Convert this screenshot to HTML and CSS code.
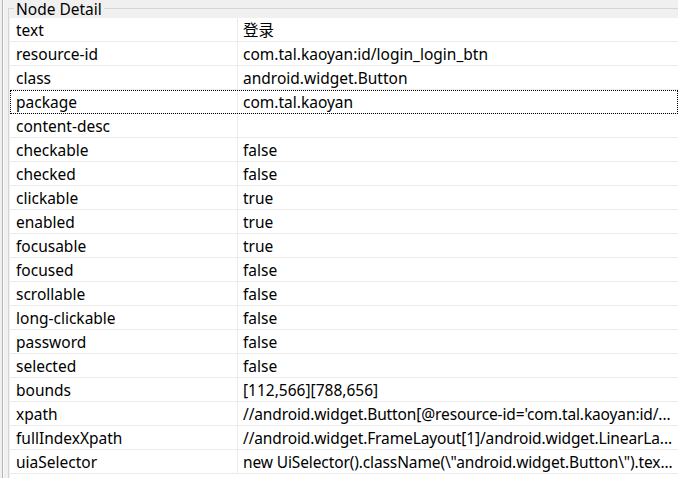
FILE: index.html
```html
<!DOCTYPE html>
<html>
<head>
<meta charset="utf-8">
<link rel="stylesheet" href="styles.css">
</head>
<body>
<div class="outer">
  <div class="edge"></div>
  <div class="group">
    <div class="legend">Node Detail</div>
    <div class="table">
      <div class="row"><div class="k">text</div><div class="v">登录</div></div>
      <div class="row"><div class="k">resource-id</div><div class="v">com.tal.kaoyan:id/login_login_btn</div></div>
      <div class="row"><div class="k">class</div><div class="v">android.widget.Button</div></div>
      <div class="row focus"><div class="k">package</div><div class="v">com.tal.kaoyan</div></div>
      <div class="row"><div class="k">content-desc</div><div class="v"></div></div>
      <div class="row"><div class="k">checkable</div><div class="v">false</div></div>
      <div class="row"><div class="k">checked</div><div class="v">false</div></div>
      <div class="row"><div class="k">clickable</div><div class="v">true</div></div>
      <div class="row"><div class="k">enabled</div><div class="v">true</div></div>
      <div class="row"><div class="k">focusable</div><div class="v">true</div></div>
      <div class="row"><div class="k">focused</div><div class="v">false</div></div>
      <div class="row"><div class="k">scrollable</div><div class="v">false</div></div>
      <div class="row"><div class="k">long-clickable</div><div class="v">false</div></div>
      <div class="row"><div class="k">password</div><div class="v">false</div></div>
      <div class="row"><div class="k">selected</div><div class="v">false</div></div>
      <div class="row"><div class="k">bounds</div><div class="v">[112,566][788,656]</div></div>
      <div class="row"><div class="k">xpath</div><div class="v tight">//android.widget.Button[@resource-id='com.tal.kaoyan:id/...</div></div>
      <div class="row"><div class="k">fullIndexXpath</div><div class="v tight">//android.widget.FrameLayout[1]/android.widget.LinearLa...</div></div>
      <div class="row"><div class="k">uiaSelector</div><div class="v tight">new UiSelector().className(\"android.widget.Button\").tex...</div></div>
    </div>
  </div>
</div>
</body>
</html>
```

FILE: styles.css
```css
html, body {
  margin: 0;
  padding: 0;
  background: #f0f0f0;
  overflow: hidden;
}
body {
  font-family: "Noto Sans", "Noto Sans CJK SC", sans-serif;
  font-size: 15.5px;
  color: #000;
}
.outer {
  display: flex;
  height: 478px;
  padding-left: 2px;
}
.edge {
  width: 1px;
  background: #b4b4b4;
  margin-right: 4px;
  border-right: 1px solid #fafafa;
}
.group {
  flex: 1;
  position: relative;
  margin-top: 8px;
  border-top: 1px solid #d5d5d5;
  border-left: 1px solid #d5d5d5;
  padding: 9px 0 0 1px;
  min-width: 0;
}
.legend {
  position: absolute;
  left: 5px;
  top: -8px;
  padding: 0 2px;
  background: #f0f0f0;
  line-height: 17px;
  font-size: 15.5px;
}
.table {
  background: #fff;
  height: 100%;
}
.row {
  display: flex;
  height: 23px;
  border-bottom: 1px solid #ebebeb;
  line-height: 24px;
}
.row.focus {
  outline: 1px dotted #000;
  outline-offset: -1px;
}
.k {
  width: 221px;
  flex: none;
  padding-left: 6px;
  border-right: 1px solid #ebebeb;
  white-space: nowrap;
  overflow: hidden;
}
.v {
  flex: 1;
  min-width: 0;
  padding-left: 5px;
  white-space: nowrap;
  overflow: hidden;
  text-overflow: ellipsis;
}
.v.tight {
  letter-spacing: -0.12px;
}
```
